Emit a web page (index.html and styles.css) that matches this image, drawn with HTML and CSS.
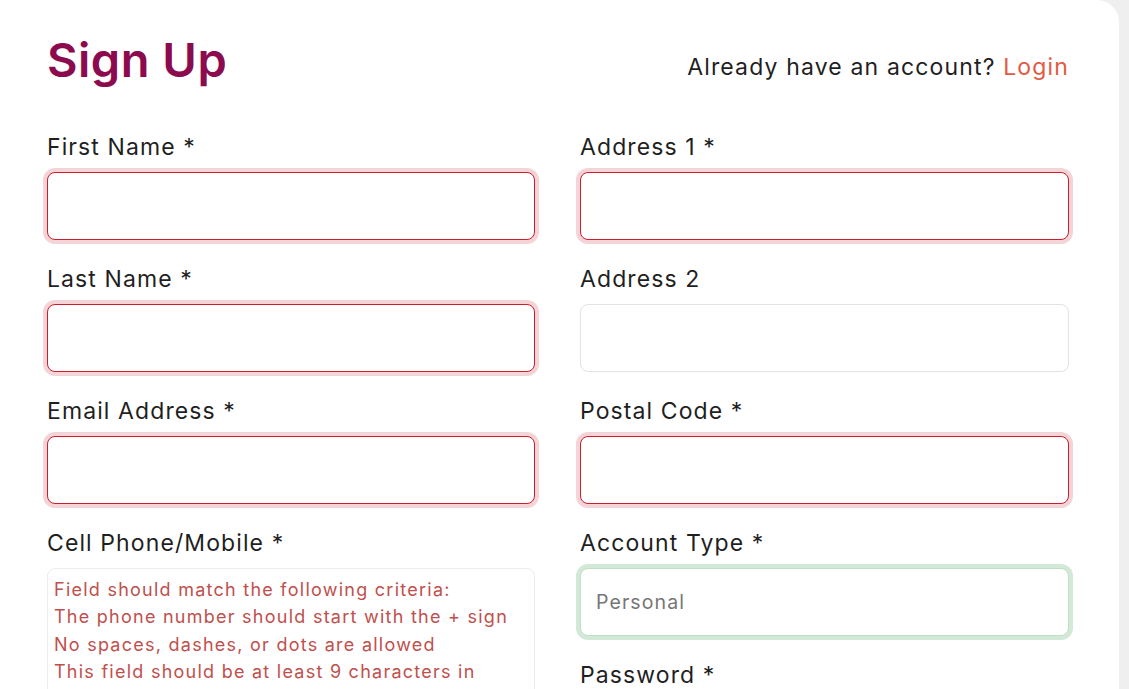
FILE: index.html
```html
<!DOCTYPE html>
<html lang="en">
<head>
<meta charset="utf-8">
<title>Sign Up</title>
<link rel="stylesheet" href="styles.css">
</head>
<body>
<div class="card">
  <div class="header">
    <h1 class="title">Sign Up</h1>
    <p class="have">Already have an account? <a class="login" href="#">Login</a></p>
  </div>
  <form class="grid">
    <div class="col">
      <div class="field">
        <label class="label">First Name *</label>
        <div class="input invalid"></div>
      </div>
      <div class="field">
        <label class="label">Last Name *</label>
        <div class="input invalid"></div>
      </div>
      <div class="field">
        <label class="label">Email Address *</label>
        <div class="input invalid"></div>
      </div>
      <div class="field">
        <label class="label">Cell Phone/Mobile *</label>
        <div class="hint">
          <p>Field should match the following criteria:</p>
          <p>The phone number should start with the + sign</p>
          <p>No spaces, dashes, or dots are allowed</p>
          <p>This field should be at least 9 characters in</p>
          <p>length</p>
        </div>
      </div>
    </div>
    <div class="col">
      <div class="field">
        <label class="label">Address 1 *</label>
        <div class="input invalid"></div>
      </div>
      <div class="field">
        <label class="label">Address 2</label>
        <div class="input"></div>
      </div>
      <div class="field">
        <label class="label">Postal Code *</label>
        <div class="input invalid"></div>
      </div>
      <div class="field">
        <label class="label">Account Type *</label>
        <div class="input valid"><span class="value">Personal</span></div>
      </div>
      <div class="field">
        <label class="label">Password *</label>
        <div class="input invalid"></div>
      </div>
    </div>
  </form>
</div>
</body>
</html>
```
FILE: styles.css
```css
html, body {
  margin: 0;
  padding: 0;
  height: 100%;
  overflow: hidden;
}
body {
  background: #efefef;
  font-family: "Inter", "Liberation Sans", sans-serif;
  color: #1f1f1f;
}
.card {
  width: 1119px;
  height: 100%;
  box-sizing: border-box;
  background: #ffffff;
  border-top-right-radius: 22px;
  padding: 32px 50px 0 47px;
}
.header {
  display: flex;
  justify-content: space-between;
  align-items: baseline;
  height: 56px;
  margin-bottom: 45px;
}
.title {
  margin: 0;
  font-size: 47px;
  line-height: 56px;
  font-weight: 600;
  color: #8c0a4e;
  letter-spacing: 0.5px;
}
.have {
  margin: 0;
  font-size: 23px;
  line-height: 28px;
  color: #1f1f1f;
  letter-spacing: 1.15px;
  position: relative;
  top: -2px;
}
.login {
  color: #e35a44;
  text-decoration: none;
}
.grid {
  display: grid;
  grid-template-columns: 488px 489px;
  column-gap: 45px;
}
.field {
  display: flex;
  flex-direction: column;
  margin-bottom: 25px;
}
.label {
  display: block;
  font-size: 23px;
  line-height: 28px;
  margin-bottom: 11px;
  color: #1f1f1f;
  letter-spacing: 1.1px;
}
.input {
  box-sizing: border-box;
  height: 68px;
  border: 1px solid #e3e3e3;
  border-radius: 8px;
  background: #fff;
  display: flex;
  align-items: center;
  padding: 0 15px;
}
.invalid {
  border-color: #cc1d2c;
  box-shadow: 0 0 0 4px #f4d4d7;
}
.valid {
  border-color: #c0dfc7;
  box-shadow: 0 0 0 4px #d2e9d8;
}
.value {
  font-size: 19.5px;
  color: #767676;
  letter-spacing: 1.1px;
}
.hint {
  box-sizing: border-box;
  border: 1px solid #ececec;
  border-radius: 8px;
  padding: 7px 6px;
  height: 160px;
}
.hint p {
  margin: 0;
  font-size: 18px;
  line-height: 27.4px;
  color: #c0504d;
  letter-spacing: 1.25px;
}
```
